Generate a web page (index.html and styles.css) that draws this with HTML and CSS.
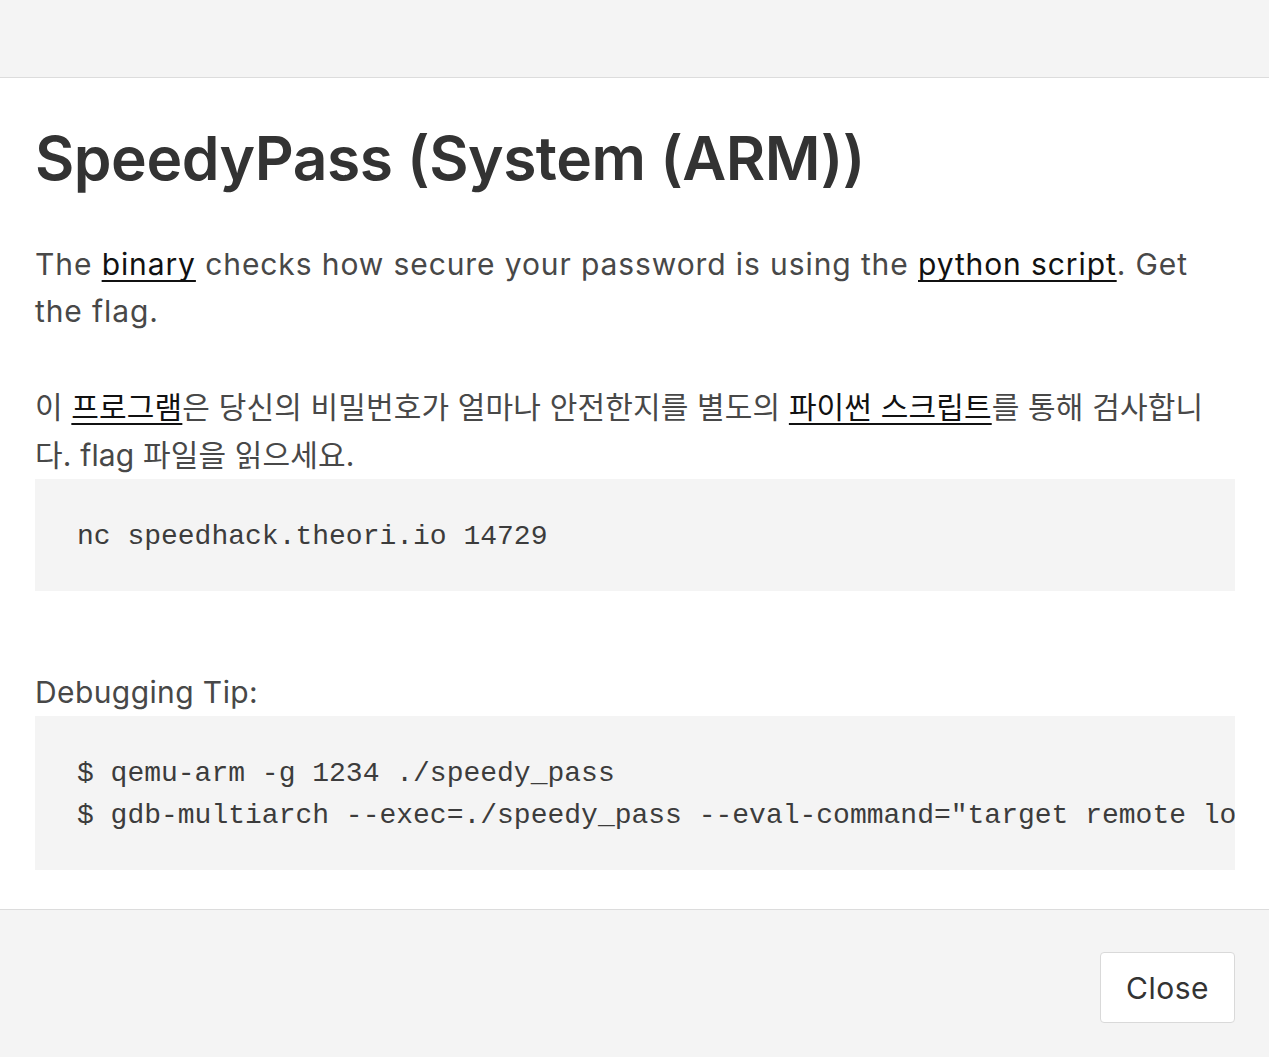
FILE: index.html
```html
<!DOCTYPE html>
<html lang="ko">
<head>
<meta charset="utf-8">
<title>SpeedyPass</title>
<link rel="stylesheet" href="styles.css">
</head>
<body>
<div class="modal">
  <div class="modal-top"></div>
  <div class="modal-body">
    <h1 class="title">SpeedyPass (System (ARM))</h1>
    <p class="text en">The <a href="#">binary</a> checks how secure your password is using the <a href="#">python script</a>. Get the flag.</p>
    <p class="text ko">이 <a href="#">프로그램</a>은 당신의 비밀번호가 얼마나 안전한지를 별도의 <a href="#">파이썬 스크립트</a>를 통해 검사합니다. flag 파일을 읽으세요.</p>
    <pre class="code">nc speedhack.theori.io 14729</pre>
    <p class="text tip">Debugging Tip:</p>
    <pre class="code">$ qemu-arm -g 1234 ./speedy_pass
$ gdb-multiarch --exec=./speedy_pass --eval-command="target remote localhost:1234"</pre>
  </div>
  <div class="modal-footer">
    <button class="btn" type="button">Close</button>
  </div>
</div>
</body>
</html>
```

FILE: styles.css
```css
html, body {
  margin: 0;
  padding: 0;
  background: #ffffff;
}
body {
  font-family: Inter, "Noto Sans CJK KR", sans-serif;
  color: #484848;
}
.modal {
  display: flex;
  flex-direction: column;
  min-height: 1057px;
}
.modal-top {
  height: 77px;
  background: #f4f4f4;
  border-bottom: 1px solid #dcdcdc;
}
.modal-body {
  padding: 40px 34px 39px 35px;
  background: #ffffff;
}
.title {
  margin: 0 0 43px 0;
  font-size: 60.5px;
  line-height: 80px;
  font-weight: 600;
  color: #333333;
  letter-spacing: -0.5px;
}
.text {
  margin: 0 0 48px 0;
  font-size: 30px;
  line-height: 47px;
  letter-spacing: 0.3px;
}
.text.en {
  letter-spacing: 0.9px;
}
.text a {
  color: #111111;
  text-decoration: underline;
  text-decoration-thickness: 2px;
  text-decoration-skip-ink: none;
  text-underline-offset: 5px;
}
.text.ko {
  margin-bottom: 0;
  line-height: 48px;
  letter-spacing: 0.15px;
}
.text.tip {
  margin: 77px 0 0 0;
  line-height: 48px;
  letter-spacing: 0.4px;
}
.code {
  margin: 0;
  padding: 37px 42px 33px 42px;
  background: #f4f4f4;
  font-family: "Liberation Mono", monospace;
  font-size: 28px;
  line-height: 42px;
  color: #3c3c3c;
  overflow: hidden;
  white-space: pre;
}
.modal-footer {
  flex: 1;
  background: #f4f4f4;
  border-top: 1px solid #dcdcdc;
  display: flex;
  justify-content: flex-end;
  align-items: flex-start;
  padding: 42px 34px 0 35px;
}
.btn {
  width: 135px;
  height: 71px;
  background: #ffffff;
  border: 1px solid #d9d9d9;
  border-radius: 4px;
  font-family: Inter, sans-serif;
  font-size: 30px;
  letter-spacing: 0.5px;
  color: #333333;
  cursor: pointer;
}
```
